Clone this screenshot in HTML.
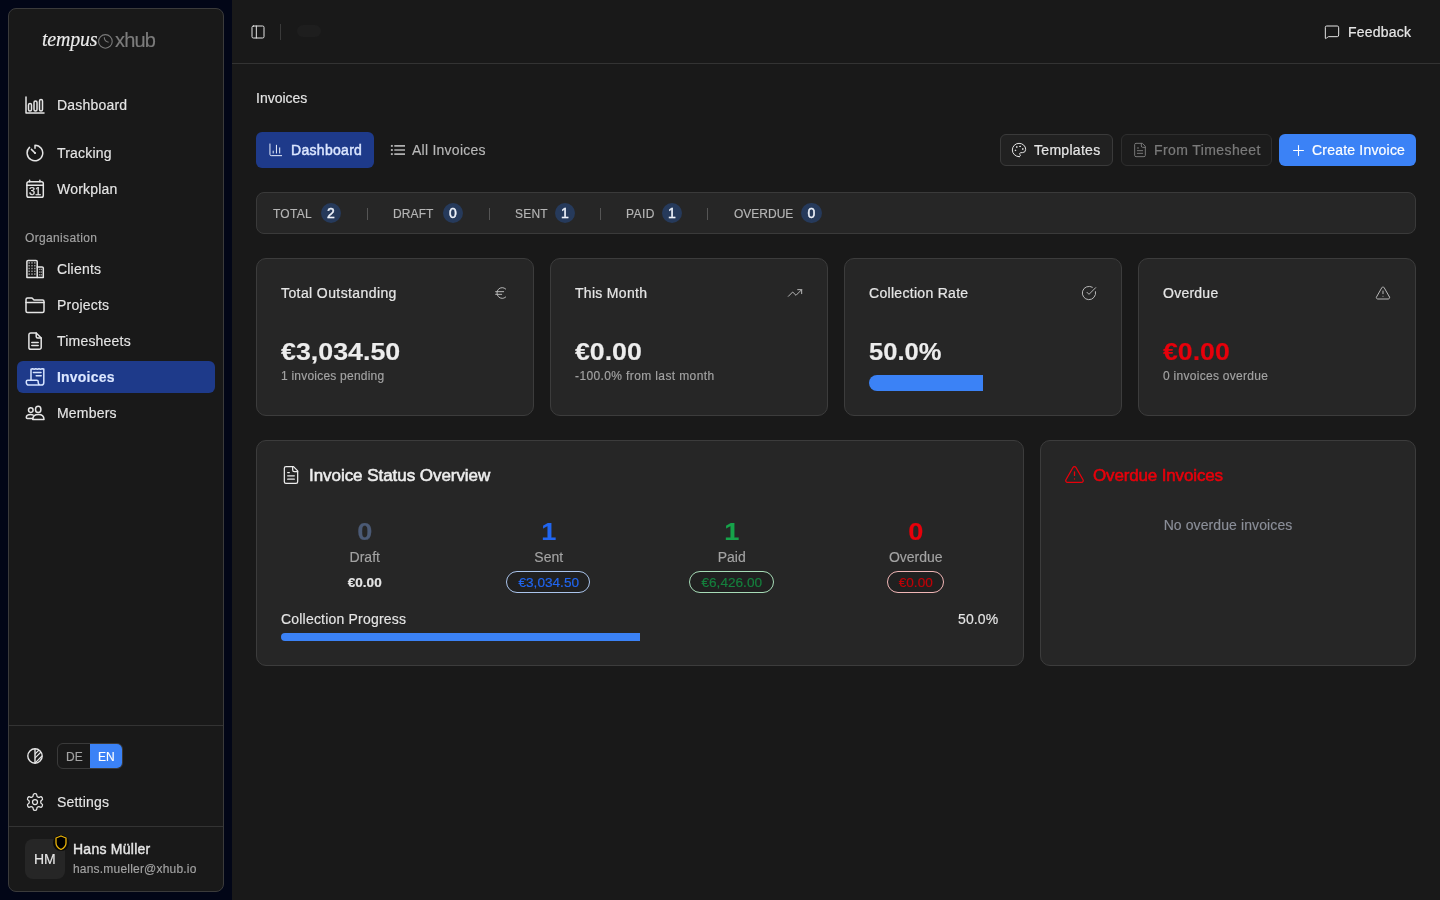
<!DOCTYPE html>
<html><head><meta charset="utf-8">
<style>
*{box-sizing:border-box;margin:0;padding:0}
html,body{width:1440px;height:900px;overflow:hidden;background:#020617;font-family:"Liberation Sans",sans-serif;color:#e5e5e5}
svg{position:absolute;display:block;overflow:visible;will-change:transform}
.t{position:absolute;line-height:1;white-space:nowrap}
.nv{letter-spacing:0.2px}
.t{will-change:transform}
.t{-webkit-text-stroke-width:0.15px}
.md{-webkit-text-stroke-width:0.22px}
.bd{-webkit-text-stroke-width:0}
.s14{font-size:14px}.s12{font-size:12px}
#sidebar{position:absolute;left:8px;top:8px;width:216px;height:884px;background:#191919;border:1px solid #3b3b3b;border-radius:8px}
#main{position:absolute;left:232px;top:0;width:1208px;height:900px;background:#191919}
.box{position:absolute}
.card{position:absolute;background:#262626;border:1px solid #3c3c3c;border-radius:10px}
.ico{fill:none;stroke:#e5e5e5;stroke-width:1.5;stroke-linecap:round;stroke-linejoin:round}
</style></head>
<body>
<div id="sidebar"></div>
<div id="main"></div>

<!-- ===== SIDEBAR ===== -->
<!-- logo -->
<div class="t" style="left:41.5px;top:29px;font-family:'Liberation Serif',serif;font-style:italic;font-size:20px;color:#ececec;letter-spacing:-0.25px">tempus</div>
<svg style="left:98px;top:33.5px" width="15" height="15" viewBox="0 0 15 15"><circle cx="7.4" cy="7.4" r="6.8" fill="none" stroke="#7a7a7a" stroke-width="1.1"/><path d="M6.3 3.3C6.3 6 6.8 7.6 10.6 8.3" fill="none" stroke="#7a7a7a" stroke-width="1.1"/></svg>
<div class="t" style="left:114.5px;top:30px;font-size:20px;color:#7c7c7c;letter-spacing:-0.8px">xhub</div>

<!-- nav -->
<svg class="ico" style="left:25px;top:96px" width="20" height="18" viewBox="0 0 20 18"><path d="M1 1V17H19"/><rect x="3.5" y="7.5" width="3" height="7.5" rx="1.5"/><rect x="9" y="5" width="3" height="10" rx="1.5"/><rect x="14.5" y="3.5" width="3" height="11.5" rx="1.5"/></svg>
<div class="t s14 nv" style="left:57px;top:98px">Dashboard</div>

<svg class="ico" style="left:26px;top:144px" width="18" height="18" viewBox="0 0 18 18"><path d="M9 4.2V1.2A7.8 7.8 0 1 1 3.5 3.4"/><path d="M9 9L5.4 5.4"/><circle cx="9" cy="9" r="1" fill="#e5e5e5" stroke="none"/></svg>
<div class="t s14 nv" style="left:57px;top:146px">Tracking</div>

<svg class="ico" style="left:20px;top:172px" width="30" height="30" viewBox="0 0 30 30" stroke-width="1.3"><rect x="6.9" y="9.7" width="16.4" height="15.5" rx="1.8"/><path d="M6.9 13.2H23.3" stroke-width="1.5"/><path d="M9.6 8.3V9.8M19.9 8.3V9.8" stroke-width="1.5"/><text x="15.1" y="23.2" text-anchor="middle" font-size="11" fill="#e5e5e5" stroke="#e5e5e5" stroke-width="0.25" font-family="Liberation Sans">31</text></svg>
<div class="t s14 nv" style="left:57px;top:182px">Workplan</div>

<div class="t s12" style="left:25px;top:232px;color:#a3a3a3;letter-spacing:0.35px">Organisation</div>

<svg class="ico" style="left:22px;top:256px" width="26" height="26" viewBox="0 0 26 26" stroke-width="1.4"><path d="M4.9 21.4V5.6A1.2 1.2 0 0 1 6.1 4.4H14A1.2 1.2 0 0 1 15.2 5.6V21.4Z"/><path d="M15.2 10.9H20.1A1.2 1.2 0 0 1 21.3 12.1V21.4H15.2"/><g fill="#9a9a9a" stroke="none"><rect x="6.45" y="6.15" width="1.5" height="1.5"/><rect x="6.45" y="8.95" width="1.5" height="1.5"/><rect x="6.45" y="11.75" width="1.5" height="1.5"/><rect x="6.45" y="14.55" width="1.5" height="1.5"/><rect x="6.45" y="17.35" width="1.5" height="1.5"/><rect x="9.25" y="6.15" width="1.5" height="1.5"/><rect x="9.25" y="8.95" width="1.5" height="1.5"/><rect x="9.25" y="11.75" width="1.5" height="1.5"/><rect x="9.25" y="14.55" width="1.5" height="1.5"/><rect x="9.25" y="17.35" width="1.5" height="1.5"/><rect x="12.05" y="6.15" width="1.5" height="1.5"/><rect x="12.05" y="8.95" width="1.5" height="1.5"/><rect x="12.05" y="11.75" width="1.5" height="1.5"/><rect x="12.05" y="14.55" width="1.5" height="1.5"/><rect x="12.05" y="17.35" width="1.5" height="1.5"/><rect x="16.900000000000002" y="12.700000000000001" width="1.4" height="1.4"/><rect x="16.900000000000002" y="15.400000000000002" width="1.4" height="1.4"/><rect x="16.900000000000002" y="18.1" width="1.4" height="1.4"/><rect x="18.7" y="12.700000000000001" width="1.4" height="1.4"/><rect x="18.7" y="15.400000000000002" width="1.4" height="1.4"/><rect x="18.7" y="18.1" width="1.4" height="1.4"/></g></svg>
<div class="t s14 nv" style="left:57px;top:262px">Clients</div>

<svg class="ico" style="left:25px;top:296px" width="20" height="18" viewBox="0 0 20 18"><path d="M1 3.5A1.5 1.5 0 0 1 2.5 2H7L9 4H17.5A1.5 1.5 0 0 1 19 5.5V15A1.5 1.5 0 0 1 17.5 16.5H2.5A1.5 1.5 0 0 1 1 15Z"/><path d="M1 6.5H19"/></svg>
<div class="t s14 nv" style="left:57px;top:298px">Projects</div>

<svg class="ico" style="left:22px;top:328px" width="26" height="26" viewBox="0 0 26 26" stroke-width="1.4"><path d="M14.2 5H8.8A1.9 1.9 0 0 0 6.9 6.9V19.4A1.9 1.9 0 0 0 8.8 21.3H17.3A1.9 1.9 0 0 0 19.2 19.4V10Z"/><path d="M14.2 5V8.5A1.5 1.5 0 0 0 15.7 10H19.2"/><path d="M9.8 14.6H16.2M9.8 17.6H16.2"/></svg>
<div class="t s14 nv" style="left:57px;top:334px">Timesheets</div>

<div class="box" style="left:17px;top:361px;width:198px;height:32px;background:#1e3a8a;border-radius:6px"></div>
<svg class="ico" style="left:22px;top:364px;stroke:#d6e4ff" width="26" height="26" viewBox="0 0 26 26" stroke-width="1.4"><path d="M9 16.2V5.2L10.6 4.7L12.2 5.2L13.8 4.7L15.4 5.2L17 4.7L18.6 5.2L20.2 4.7L21.8 5.1V18.5A2.6 2.6 0 0 1 19.2 21.1H6.8A2.5 2.5 0 0 1 4.3 18.6V17.6A1.4 1.4 0 0 1 5.7 16.2H14.8A1.4 1.4 0 0 1 16.2 17.6V18.5A2.6 2.6 0 0 0 18.8 21.1"/><path d="M11.4 8.6H19M14.2 11.8H19.2"/></svg>
<div class="t s14 nv" style="left:57px;top:370px;color:#dbe6ff;font-weight:bold">Invoices</div>

<svg class="ico" style="left:22px;top:400px" width="26" height="26" viewBox="0 0 26 26" stroke-width="1.4"><circle cx="8.8" cy="10.1" r="2.3"/><ellipse cx="16.2" cy="9.4" rx="2.7" ry="3.1"/><path d="M10.6 18.6H5.3A1 1 0 0 1 4.3 17.6C4.3 15.6 6 14.6 8.6 14.6C9.6 14.6 10.5 14.8 11.2 15.2"/><path d="M10.7 19.5C10.7 16.3 13.1 14.4 16.4 14.4C19.7 14.4 22 16.3 22 19.5Z"/></svg>
<div class="t s14 nv" style="left:57px;top:406px">Members</div>

<!-- footer -->
<div class="box" style="left:9px;top:725px;width:214px;height:1px;background:#333"></div>
<svg style="left:27px;top:748px" width="16" height="16" viewBox="0 0 16 16"><defs><clipPath id="rh"><rect x="8" y="0" width="8" height="16"/></clipPath></defs><circle cx="8" cy="8" r="7.2" fill="none" stroke="#e5e5e5" stroke-width="1.4"/><path d="M8 0.8V15.2" stroke="#e5e5e5" stroke-width="1.4"/><g clip-path="url(#rh)" stroke="#e5e5e5" stroke-width="1.2"><path d="M5 9L12 2M5 13L14 4M8 15L15 8"/></g></svg>
<div class="box" style="left:57px;top:743px;width:66px;height:26px;border:1px solid #3a3a3a;border-radius:6px;overflow:hidden">
  <div class="box" style="left:32px;top:0;width:33px;height:24px;background:#3b82f6"></div>
</div>
<div class="t s12" style="left:66px;top:751px;color:#a3a3a3">DE</div>
<div class="t s12" style="left:98px;top:751px;color:#fff">EN</div>

<svg class="ico" style="left:25px;top:792px" width="20" height="20" viewBox="0 0 24 24" stroke-width="2"><path d="M12.22 2h-.44a2 2 0 0 0-2 2v.18a2 2 0 0 1-1 1.73l-.43.25a2 2 0 0 1-2 0l-.15-.08a2 2 0 0 0-2.73.73l-.22.38a2 2 0 0 0 .73 2.73l.15.1a2 2 0 0 1 1 1.72v.51a2 2 0 0 1-1 1.74l-.15.09a2 2 0 0 0-.73 2.73l.22.38a2 2 0 0 0 2.73.73l.15-.08a2 2 0 0 1 2 0l.43.25a2 2 0 0 1 1 1.73V20a2 2 0 0 0 2 2h.44a2 2 0 0 0 2-2v-.18a2 2 0 0 1 1-1.73l.43-.25a2 2 0 0 1 2 0l.15.08a2 2 0 0 0 2.73-.73l.22-.39a2 2 0 0 0-.73-2.73l-.15-.08a2 2 0 0 1-1-1.74v-.5a2 2 0 0 1 1-1.74l.15-.09a2 2 0 0 0 .73-2.73l-.22-.38a2 2 0 0 0-2.73-.73l-.15.08a2 2 0 0 1-2 0l-.43-.25a2 2 0 0 1-1-1.73V4a2 2 0 0 0-2-2z"/><circle cx="12" cy="12" r="3"/></svg>
<div class="t s14 nv" style="left:57px;top:795px">Settings</div>

<div class="box" style="left:9px;top:826px;width:214px;height:1px;background:#333"></div>
<div class="box" style="left:25px;top:839px;width:40px;height:40px;background:#262626;border-radius:8px"></div>
<div class="t s14" style="left:34px;top:852px;color:#e5e5e5">HM</div>
<svg style="left:53px;top:834px" width="16" height="18" viewBox="0 0 16 18"><circle cx="8" cy="9" r="8" fill="#0a0a0a"/><path d="M8 2L13 4V9C13 12 10.8 14.2 8 15.5C5.2 14.2 3 12 3 9V4Z" fill="#000" stroke="#eab308" stroke-width="1.3" stroke-linejoin="round"/></svg>
<div class="t s14" style="left:73px;top:842px;-webkit-text-stroke-width:0.4px;color:#e5e5e5;letter-spacing:0.25px">Hans Müller</div>
<div class="t s12" style="left:73px;top:863px;color:#a3a3a3;letter-spacing:0.2px">hans.mueller@xhub.io</div>

<!-- ===== HEADER ===== -->
<div class="box" style="left:232px;top:63px;width:1208px;height:1px;background:#333"></div>
<svg class="ico" style="left:250px;top:23.6px" width="16" height="16" viewBox="0 0 24 24" stroke-width="2.2"><rect width="18" height="18" x="3" y="3" rx="2"/><path d="M9.5 3v18"/></svg>
<div class="box" style="left:280px;top:23.5px;width:1px;height:16px;background:#3a3a3a"></div>
<div class="box" style="left:297px;top:25px;width:24px;height:12px;background:#1e1e1e;border-radius:6px"></div>

<svg class="ico" style="left:1323.5px;top:23.5px" width="16" height="16" viewBox="0 0 24 24" stroke-width="2.3"><path d="M22 17a2 2 0 0 1-2 2H6.828a2 2 0 0 0-1.414.586l-2.202 2.202A.71.71 0 0 1 2 21.286V5a2 2 0 0 1 2-2h16a2 2 0 0 1 2 2z"/></svg>
<div class="t md s14" style="left:1348px;top:25px;letter-spacing:0.2px">Feedback</div>

<!-- ===== CONTENT ===== -->
<div class="t s14" style="left:256px;top:91px">Invoices</div>

<div class="box" style="left:256px;top:132px;width:118px;height:36px;background:#1e3a8a;border-radius:6px"></div>
<svg class="ico" style="left:268.3px;top:142.3px;stroke:#eef3ff" width="15.6" height="15.6" viewBox="0 0 24 24" stroke-width="2.9"><path d="M3 3v16a2 2 0 0 0 2 2h16"/><path d="M18 17V9"/><path d="M13 17V5"/><path d="M8 17v-3"/></svg>
<div class="t s14" style="left:290.5px;top:143px;color:#dbe6ff;-webkit-text-stroke-width:0.45px;letter-spacing:0.3px">Dashboard</div>

<svg style="left:390px;top:144px" width="16" height="12" viewBox="0 0 16 12"><g fill="#b0b0b0"><rect x="0.9" y="0.95" width="1.9" height="1.9"/><rect x="0.9" y="5.05" width="1.9" height="1.9"/><rect x="0.9" y="9.15" width="1.9" height="1.9"/></g><path d="M4.3 1.9H15M4.3 6H15M4.3 10.1H15" stroke="#b0b0b0" stroke-width="1.7"/></svg>
<div class="t s14" style="left:412px;top:143px;color:#b8b8b8;letter-spacing:0.25px">All Invoices</div>

<div class="box" style="left:1000px;top:134px;width:113px;height:32px;background:#212121;border:1px solid #3a3a3a;border-radius:6px"></div>
<svg class="ico" style="left:1011px;top:142px" width="16" height="16" viewBox="0 0 24 24" stroke-width="2.3"><path d="M12 22a1 1 0 0 1 0-20 10 9 0 0 1 10 9 5 5 0 0 1-5 5h-2.25a1.75 1.75 0 0 0-1.4 2.8l.3.4a1.75 1.75 0 0 1-1.4 2.8z"/><circle cx="13.5" cy="6.5" r=".5" fill="currentColor"/><circle cx="17.5" cy="10.5" r=".5" fill="currentColor"/><circle cx="6.5" cy="12.5" r=".5" fill="currentColor"/><circle cx="8.5" cy="7.5" r=".5" fill="currentColor"/></svg>
<div class="t md s14" style="left:1034px;top:143px;letter-spacing:0.3px">Templates</div>

<div class="box" style="left:1121px;top:134px;width:151px;height:32px;background:#1c1c1c;border:1px solid #2e2e2e;border-radius:6px"></div>
<svg class="ico" style="left:1132px;top:142px;stroke:#777" width="16" height="16" viewBox="0 0 24 24" stroke-width="2"><path d="M15 2H6a2 2 0 0 0-2 2v16a2 2 0 0 0 2 2h12a2 2 0 0 0 2-2V7Z"/><path d="M14 2v4a2 2 0 0 0 2 2h4"/><path d="M10 9H8"/><path d="M16 13H8"/><path d="M16 17H8"/></svg>
<div class="t md s14" style="left:1154px;top:143px;color:#7a7a7a;letter-spacing:0.4px">From Timesheet</div>

<div class="box" style="left:1279px;top:134px;width:137px;height:32px;background:#3b82f6;border-radius:6px"></div>
<svg class="ico" style="left:1289.5px;top:142px;stroke:#fff" width="17" height="17" viewBox="0 0 24 24" stroke-width="2.2"><path d="M5 12h14"/><path d="M12 5v14"/></svg>
<div class="t md s14" style="left:1312px;top:143px;color:#fff;letter-spacing:0.2px">Create Invoice</div>

<!-- stats bar -->
<div class="box" style="left:256px;top:192px;width:1160px;height:42px;background:#262626;border:1px solid #3a3a3a;border-radius:8px"></div>

<!-- stats items -->
<div class="t s12" style="left:273px;top:208px;color:#b5b5b5;letter-spacing:0.25px">TOTAL</div>
<div class="box" style="left:321px;top:203px;width:20px;height:20px;border-radius:10px;background:#263a5b"></div>
<div class="t" style="left:321px;top:205.5px;width:20px;text-align:center;font-size:14px;-webkit-text-stroke-width:0.45px;color:#eef2fa">2</div>
<div class="box" style="left:367px;top:208px;width:1px;height:12px;background:#555"></div>
<div class="t s12" style="left:393px;top:208px;color:#b5b5b5;letter-spacing:0.1px">DRAFT</div>
<div class="box" style="left:443px;top:203px;width:20px;height:20px;border-radius:10px;background:#263a5b"></div>
<div class="t" style="left:443px;top:205.5px;width:20px;text-align:center;font-size:14px;-webkit-text-stroke-width:0.45px;color:#eef2fa">0</div>
<div class="box" style="left:489px;top:208px;width:1px;height:12px;background:#555"></div>
<div class="t s12" style="left:515px;top:208px;color:#b5b5b5;letter-spacing:0.2px">SENT</div>
<div class="box" style="left:555px;top:203px;width:20px;height:20px;border-radius:10px;background:#263a5b"></div>
<div class="t" style="left:555px;top:205.5px;width:20px;text-align:center;font-size:14px;-webkit-text-stroke-width:0.45px;color:#eef2fa">1</div>
<div class="box" style="left:600px;top:208px;width:1px;height:12px;background:#555"></div>
<div class="t s12" style="left:626px;top:208px;color:#b5b5b5;letter-spacing:0.4px">PAID</div>
<div class="box" style="left:662px;top:203px;width:20px;height:20px;border-radius:10px;background:#263a5b"></div>
<div class="t" style="left:662px;top:205.5px;width:20px;text-align:center;font-size:14px;-webkit-text-stroke-width:0.45px;color:#eef2fa">1</div>
<div class="box" style="left:707px;top:208px;width:1px;height:12px;background:#555"></div>
<div class="t s12" style="left:734px;top:208px;color:#b5b5b5;letter-spacing:0px">OVERDUE</div>
<div class="box" style="left:801px;top:203px;width:21px;height:20px;border-radius:10px;background:#263a5b"></div>
<div class="t" style="left:801px;top:205.5px;width:21px;text-align:center;font-size:14px;-webkit-text-stroke-width:0.45px;color:#eef2fa">0</div>

<!-- KPI cards -->
<div class="card" style="left:256px;top:258px;width:278px;height:158px"></div>
<div class="card" style="left:550px;top:258px;width:278px;height:158px"></div>
<div class="card" style="left:844px;top:258px;width:278px;height:158px"></div>
<div class="card" style="left:1138px;top:258px;width:278px;height:158px"></div>

<div class="t md s14" style="left:281px;top:285.8px;letter-spacing:0.4px">Total Outstanding</div>
<svg class="ico" style="left:492.8px;top:285px;stroke:#b8b8b8" width="16" height="16" viewBox="0 0 24 24" stroke-width="2"><path d="M4 10h12"/><path d="M4 14h9"/><path d="M19 6a7.7 7.7 0 0 0-5.2-2A7.9 7.9 0 0 0 6 12c0 4.4 3.5 8 7.8 8 2 0 3.8-.8 5.2-2"/></svg>
<div class="t" style="left:281px;top:339.5px;font-size:24px;font-weight:bold;color:#ededed;transform:scaleX(1.117);transform-origin:0 0">€3,034.50</div>
<div class="t s12" style="left:281px;top:370px;color:#a3a3a3;letter-spacing:0.22px">1 invoices pending</div>

<div class="t md s14" style="left:575px;top:285.8px;letter-spacing:0.3px">This Month</div>
<svg class="ico" style="left:787px;top:285px;stroke:#b8b8b8" width="16" height="16" viewBox="0 0 24 24" stroke-width="2"><path d="M16 7h6v6"/><path d="m22 7-8.5 8.5-5-5L2 17"/></svg>
<div class="t" style="left:575px;top:339.5px;font-size:24px;font-weight:bold;color:#ededed;transform:scaleX(1.112);transform-origin:0 0">€0.00</div>
<div class="t s12" style="left:575px;top:370px;color:#a3a3a3;letter-spacing:0.38px">-100.0% from last month</div>

<div class="t md s14" style="left:869px;top:285.8px;letter-spacing:0.3px">Collection Rate</div>
<svg class="ico" style="left:1081px;top:285px;stroke:#b8b8b8" width="16" height="16" viewBox="0 0 24 24" stroke-width="2"><path d="M21.801 10A10 10 0 1 1 17 3.335"/><path d="m9 11 3 3L22 4"/></svg>
<div class="t" style="left:869px;top:339.5px;font-size:24px;font-weight:bold;color:#ededed;transform:scaleX(1.063);transform-origin:0 0">50.0%</div>
<div class="box" style="left:869px;top:375px;width:114px;height:16px;background:#3b82f6;border-radius:8px 0 0 8px"></div>

<div class="t md s14" style="left:1163px;top:285.8px;letter-spacing:0.25px">Overdue</div>
<svg class="ico" style="left:1375px;top:285px;stroke:#b8b8b8" width="16" height="16" viewBox="0 0 24 24" stroke-width="2"><path d="m21.73 18-8-14a2 2 0 0 0-3.48 0l-8 14A2 2 0 0 0 4 21h16a2 2 0 0 0 1.73-3"/><path d="M12 9v4"/><path d="M12 17h.01"/></svg>
<div class="t" style="left:1163px;top:339.5px;font-size:24px;font-weight:bold;color:#e7000b;transform:scaleX(1.112);transform-origin:0 0">€0.00</div>
<div class="t s12" style="left:1163px;top:370px;color:#a3a3a3;letter-spacing:0.28px">0 invoices overdue</div>

<!-- Invoice status overview -->
<div class="card" style="left:256px;top:440px;width:768px;height:226px"></div>
<svg class="ico" style="left:281px;top:465px;stroke:#ececec" width="20" height="20" viewBox="0 0 24 24" stroke-width="2.1"><path d="M15 2H6a2 2 0 0 0-2 2v16a2 2 0 0 0 2 2h12a2 2 0 0 0 2-2V7Z"/><path d="M14 2v4a2 2 0 0 0 2 2h4"/><path d="M10 9H8"/><path d="M16 13H8"/><path d="M16 17H8"/></svg>
<div class="t" style="left:309px;top:467px;font-size:17px;-webkit-text-stroke-width:0.55px;letter-spacing:-0.05px;color:#ededed">Invoice Status Overview</div>

<div class="t" style="left:281px;top:519.7px;width:167.5px;text-align:center;font-size:24px;font-weight:bold;transform:scaleX(1.13);color:#4b5a75">0</div>
<div class="t s14" style="left:281px;top:550.2px;width:167.5px;text-align:center;color:#a3a3a3">Draft</div>
<div class="t s12" style="left:281px;top:576.8px;width:167.5px;text-align:center;font-weight:bold;color:#e5e5e5;transform:scaleX(1.125)">€0.00</div>

<div class="t" style="left:464.5px;top:519.7px;width:167.5px;text-align:center;font-size:24px;font-weight:bold;transform:scaleX(1.13);color:#2166f0">1</div>
<div class="t s14" style="left:464.5px;top:550.2px;width:167.5px;text-align:center;color:#a3a3a3">Sent</div>
<div class="box" style="left:506px;top:571px;width:84px;height:22px;border:1px solid #aac4ec;border-radius:11px;background:#202020"></div>
<div class="t s12" style="left:464.5px;top:576.8px;width:167.5px;text-align:center;color:#2166f0;transform:scaleX(1.135)">€3,034.50</div>

<div class="t" style="left:648px;top:519.7px;width:167.5px;text-align:center;font-size:24px;font-weight:bold;transform:scaleX(1.13);color:#16a34a">1</div>
<div class="t s14" style="left:648px;top:550.2px;width:167.5px;text-align:center;color:#a3a3a3">Paid</div>
<div class="box" style="left:689px;top:571px;width:85px;height:22px;border:1px solid #a7dcb7;border-radius:11px;background:#202020"></div>
<div class="t s12" style="left:648px;top:576.8px;width:167.5px;text-align:center;color:#15803d;transform:scaleX(1.135)">€6,426.00</div>

<div class="t" style="left:831.5px;top:519.7px;width:167.5px;text-align:center;font-size:24px;font-weight:bold;transform:scaleX(1.13);color:#e7000b">0</div>
<div class="t s14" style="left:831.5px;top:550.2px;width:167.5px;text-align:center;color:#a3a3a3">Overdue</div>
<div class="box" style="left:887px;top:571px;width:57px;height:22px;border:1px solid #f0b6b6;border-radius:11px;background:#202020"></div>
<div class="t s12" style="left:831.5px;top:576.8px;width:167.5px;text-align:center;color:#c10007;transform:scaleX(1.13)">€0.00</div>

<div class="t s14" style="left:281px;top:612px;letter-spacing:0.2px">Collection Progress</div>
<div class="t s14" style="left:958px;top:612px;letter-spacing:0.1px">50.0%</div>
<div class="box" style="left:281px;top:633px;width:359px;height:8px;background:#3b82f6;border-radius:4px 0 0 4px"></div>

<!-- Overdue invoices -->
<div class="card" style="left:1040px;top:440px;width:376px;height:226px"></div>
<svg class="ico" style="left:1064px;top:464px;stroke:#e7000b" width="21" height="21" viewBox="0 0 24 24" stroke-width="2"><path d="m21.73 18-8-14a2 2 0 0 0-3.48 0l-8 14A2 2 0 0 0 4 21h16a2 2 0 0 0 1.73-3"/><path d="M12 9v4"/><path d="M12 17h.01"/></svg>
<div class="t" style="left:1093px;top:467px;font-size:17px;-webkit-text-stroke-width:0.55px;letter-spacing:-0.15px;color:#e7000b">Overdue Invoices</div>
<div class="t s14" style="left:1040px;top:518px;width:376px;text-align:center;color:#8b8f99;letter-spacing:0.1px">No overdue invoices</div>
</body></html>
